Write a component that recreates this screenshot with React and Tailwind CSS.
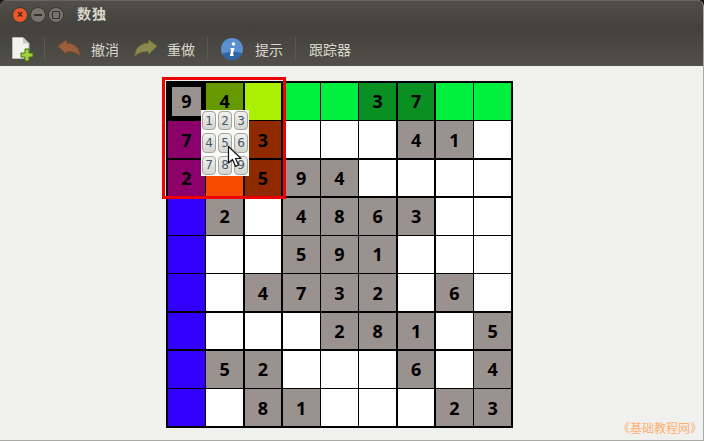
const G = '#9a928e', W = '#ffffff', B = '#3300ff', L = '#00f040', D = '#0a8f22', P = '#8b006b', O = '#f54a00', R = '#8f2a00';
const cells = [
  [['9', G], ['4', '#669900'], ['', '#aaf000'], ['', L], ['', L], ['3', D], ['7', D], ['', L], ['', L]],
  [['7', P], ['', O], ['3', R], ['', W], ['', W], ['', W], ['4', G], ['1', G], ['', W]],
  [['2', P], ['', O], ['5', R], ['9', G], ['4', G], ['', W], ['', W], ['', W], ['', W]],
  [['', B], ['2', G], ['', W], ['4', G], ['8', G], ['6', G], ['3', G], ['', W], ['', W]],
  [['', B], ['', W], ['', W], ['5', G], ['9', G], ['1', G], ['', W], ['', W], ['', W]],
  [['', B], ['', W], ['4', G], ['7', G], ['3', G], ['2', G], ['', W], ['6', G], ['', W]],
  [['', B], ['', W], ['', W], ['', W], ['2', G], ['8', G], ['1', G], ['', W], ['5', G]],
  [['', B], ['5', G], ['2', G], ['', W], ['', W], ['', W], ['6', G], ['', W], ['4', G]],
  [['', B], ['', W], ['8', G], ['1', G], ['', W], ['', W], ['', W], ['2', G], ['3', G]],
];
const cjk = { fontFamily: '"Noto Sans CJK SC", "Noto Sans", sans-serif' };

function Sep() {
  return <div className="w-px h-[24px] bg-[#33322e] border-r border-[#5a5952]" />;
}

function ToolLabel({ children, className }) {
  return <span className={`text-[14px] leading-none text-[#d8d5cc] ${className}`} style={cjk}>{children}</span>;
}

function NewIcon() {
  return (
    <svg width="24" height="26" viewBox="0 0 24 26">
      <path d="M1.5 1.5H12L18 7.5V22.5H1.5Z" fill="#f2f2ee" stroke="#b9b9b2" />
      <path d="M12 1.5V7.5H18Z" fill="#c9c9c3" />
      <path d="M14 13h4v4h4v4h-4v4h-4v-4h-4v-4h4z" fill="#a4d23c" stroke="#3f6f10" />
    </svg>
  );
}

function Arrow({ flip, fill, stroke }) {
  return (
    <svg width="24" height="18" viewBox="0 0 24 18" style={flip ? { transform: 'scaleX(-1)' } : undefined}>
      <path d="M1 7L9.5 0.8V4.2C17 4.2 22.8 8.5 23 17C20 14 16 12.6 9.5 12.6V15.5Z" fill={fill} stroke={stroke} strokeLinejoin="round" />
    </svg>
  );
}

function InfoIcon() {
  return (
    <svg width="24" height="24" viewBox="0 0 24 24">
      <defs>
        <clipPath id="infoclip"><circle cx="12" cy="12" r="11" /></clipPath>
      </defs>
      <circle cx="12" cy="12" r="11" fill="#5a8fd0" />
      <path d="M0 18C8 14 16 14 24 17V24H0Z" fill="#2f65a5" clipPath="url(#infoclip)" />
      <circle cx="13.5" cy="7" r="1.8" fill="#fff" />
      <path d="M10.5 11H14.5L12.8 17.5H14L13.5 19H9.8L11.4 12.4H10.2Z" fill="#fff" />
    </svg>
  );
}

function Cursor() {
  return (
    <svg className="absolute left-[227px] top-[145px]" width="20" height="24" viewBox="0 0 20 24">
      <path d="M1.5 1.5V18L5.5 14.5L8.5 21.5L11.5 20L8.5 13.5H14Z" fill="#fff" stroke="#111" strokeWidth="1.2" strokeLinejoin="round" />
    </svg>
  );
}

function Popup() {
  return (
    <div className="absolute left-[201px] top-[110px] w-[48px] h-[66px] bg-[#fafaf8] grid grid-cols-3 grid-rows-3 gap-x-[2px] gap-y-[3px] px-[1px] py-[1px]">
      {[1, 2, 3, 4, 5, 6, 7, 8, 9].map((n) => (
        <div
          key={n}
          className="rounded-[4px] border border-[#a5a49d] bg-gradient-to-b from-[#f0f0ec] to-[#d6d6d0] flex items-center justify-center text-[12px] leading-none text-[#46586c]"
          style={{ fontFamily: '"DejaVu Sans", sans-serif' }}
        >
          {n}
        </div>
      ))}
    </div>
  );
}

export default function App() {
  return (
    <div className="relative w-[704px] h-[441px] overflow-hidden bg-[#1a1816]">
      <div className="h-[441px] rounded-t-[7px] overflow-hidden flex flex-col bg-[#f0f1ef] border-b border-r border-[#a8a8a4]">
        <div className="h-[66px] bg-[#45443e]">
          <div className="h-[28px] flex items-center pl-[12px] bg-gradient-to-b from-[#4f4e48] to-[#42413c] border-t border-[#66655e]">
            <div className="w-[16px] h-[16px] rounded-full bg-[#e8582c] border border-[#3a3833] flex items-center justify-center text-[10px] leading-none font-bold text-[#40200f]" style={{ fontFamily: '"Liberation Sans", sans-serif' }}>×</div>
            <div className="ml-[2px] w-[16px] h-[16px] rounded-full bg-[#75746c] border border-[#3a3833] flex items-center justify-center">
              <div className="w-[8px] h-[2px] bg-[#33322e]" />
            </div>
            <div className="ml-[2px] w-[16px] h-[16px] rounded-full bg-[#75746c] border border-[#3a3833] flex items-center justify-center">
              <div className="w-[8px] h-[8px] border border-[#33322e]" />
            </div>
            <span className="ml-[13px] -mt-[3px] text-[14px] tracking-[1px] font-bold leading-none text-[#d9d6cd]" style={cjk}>数独</span>
          </div>
          <div className="h-[38px] flex items-center pl-[11px] pt-[4px] bg-gradient-to-b from-[#42413c] to-[#514f49]">
            <NewIcon />
            <div className="ml-[9px]"><Sep /></div>
            <div className="ml-[12px] -mt-[2px]"><Arrow fill="#9c5f3e" stroke="#7a4a30" /></div>
            <ToolLabel className="ml-[10px]">撤消</ToolLabel>
            <div className="ml-[15px] -mt-[2px]"><Arrow flip fill="#8a8a4c" stroke="#6f6f3c" /></div>
            <ToolLabel className="ml-[9px]">重做</ToolLabel>
            <div className="ml-[12px]"><Sep /></div>
            <div className="ml-[12px]"><InfoIcon /></div>
            <ToolLabel className="ml-[11px]">提示</ToolLabel>
            <div className="ml-[12px]"><Sep /></div>
            <ToolLabel className="ml-[13px]">跟踪器</ToolLabel>
          </div>
        </div>
        <div className="pl-[166px] pt-[15px]">
          <div className="w-[347px] h-[347px] bg-black p-[2px] grid grid-cols-9 grid-rows-9 gap-[1.5px]">
            {cells.flat().map(([v, bg], i) => (
              <div
                key={i}
                className={`flex items-center justify-center text-[18px] font-bold text-black leading-none ${i === 0 ? 'border-[4px] border-black' : ''}`}
                style={{ backgroundColor: bg, fontFamily: '"Noto Sans", "Open Sans", sans-serif' }}
              >
                {v}
              </div>
            ))}
          </div>
        </div>
      </div>
      <div className="absolute left-[162px] top-[77px] w-[124px] h-[122px] border-[3px] border-[#f00000]" />
      <Popup />
      <Cursor />
      <span className="absolute left-[618px] top-[420px] text-[12px] leading-[16px] text-[#ffae70]" style={cjk}>《基础教程网》</span>
    </div>
  );
}
